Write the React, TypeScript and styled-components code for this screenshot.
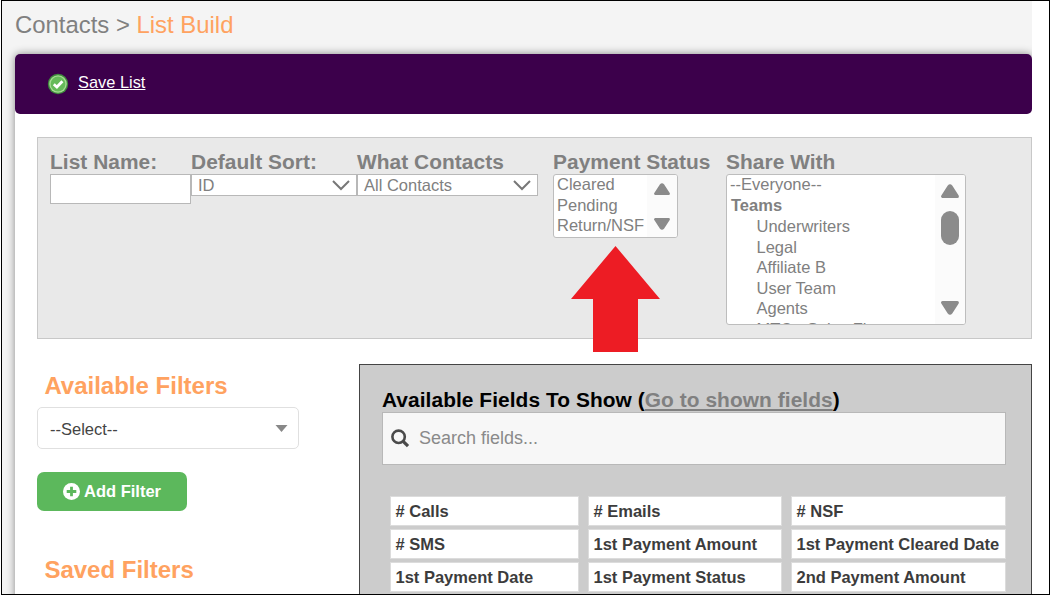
import React from 'react';
import styled, { createGlobalStyle } from 'styled-components';

const GlobalStyle = createGlobalStyle`
  *, *::before, *::after { box-sizing: border-box; }
  html, body { margin: 0; padding: 0; background: #fff; overflow: hidden; }
  body { font-family: "Liberation Sans", Arial, sans-serif; color: #808080; }
  h1, h2, p, ul { margin: 0; padding: 0; }
`;

const Frame = styled.div`
  position: relative;
  width: 1049px;
  height: 595px;
  margin-left: 1px;
  border: 1px solid #000;
  background: #fff;
  overflow: hidden;
`;

const Page = styled.main`
  width: 1030px;
  height: 593px;
  padding-left: 13px;
  background: #f4f4f4;
  overflow: hidden;
`;

const Breadcrumb = styled.h1`
  height: 53px;
  padding-top: 4px;
  font-size: 23.9px;
  font-weight: 400;
  line-height: 40px;
  white-space: nowrap;
`;

const Current = styled.span`
  color: #ffa260;
`;

const Panel = styled.section`
  height: 560px;
  background: #fff;
  border-radius: 5px 5px 0 0;
  box-shadow: 0 0 8px rgba(0, 0, 0, 0.45);
`;

const Toolbar = styled.div`
  display: flex;
  align-items: center;
  height: 60px;
  padding: 0 0 4px 32px;
  border-radius: 5px;
  background: #3c004b;
`;

const CheckIcon = styled.svg`
  width: 22px;
  height: 22px;
  margin-top: 3px;
`;

const SaveLink = styled.a`
  margin-left: 9px;
  color: #fff;
  font-size: 16.4px;
  line-height: 20px;
  text-decoration: underline;
`;

const Settings = styled.div`
  display: flex;
  align-items: flex-start;
  height: 202px;
  margin: 23px 0 0 22px;
  padding: 12px 0 0 12px;
  border: 1px solid #c8c8c8;
  background: #e9e9e9;
`;

const Field = styled.div<{ $width: number }>`
  flex: none;
  width: ${(p) => p.$width}px;
`;

const Label = styled.div`
  height: 24px;
  font-size: 20.9px;
  font-weight: 700;
  letter-spacing: 0.05px;
  line-height: 24px;
  white-space: nowrap;
`;

const TextInput = styled.div`
  width: 141px;
  height: 30px;
  border: 1px solid #b8b8b8;
  background: #fff;
`;

const Select = styled.div<{ $width: number }>`
  display: flex;
  align-items: center;
  justify-content: space-between;
  width: ${(p) => p.$width}px;
  height: 22px;
  padding: 0 6px;
  border: 1px solid #b8b8b8;
  background: #fff;
  font-size: 16.5px;
  line-height: 20px;
`;

const ListBox = styled.div<{ $width: number; $height: number }>`
  display: flex;
  width: ${(p) => p.$width}px;
  height: ${(p) => p.$height}px;
  border: 1px solid #bdbdbd;
  border-radius: 3px;
  background: #fff;
  overflow: hidden;
`;

const Options = styled.ul`
  flex: 1;
  min-width: 0;
  padding-left: 3px;
  list-style: none;
  white-space: nowrap;
`;

const Option = styled.li<{ $kind?: 'group' | 'child' }>`
  height: 20.5px;
  padding-left: ${(p) => (p.$kind === 'child' ? 26.5 : p.$kind === 'group' ? 1 : 0)}px;
  font-size: 16.5px;
  font-weight: ${(p) => (p.$kind === 'group' ? 700 : 400)};
  line-height: ${(p) => (p.$kind === 'child' ? 20 : 18.6)}px;
`;

const ScrollTrack = styled.div<{ $width: number; $pad: string }>`
  display: flex;
  flex: none;
  flex-direction: column;
  align-items: center;
  width: ${(p) => p.$width}px;
  padding: ${(p) => p.$pad};
  background: #fbfbfb;
`;

const ScrollThumb = styled.div`
  width: 18px;
  height: 34px;
  margin-top: 13px;
  border-radius: 9px;
  background: #8b8b8b;
`;

const BottomArrow = styled.div`
  display: flex;
  margin-top: auto;
`;

const Columns = styled.div`
  display: flex;
  align-items: flex-start;
  margin: 25px 0 0 22px;
`;

const Filters = styled.div`
  width: 322px;
`;

const FilterHeading = styled.h2`
  padding-left: 7.4px;
  color: #ffa260;
  font-size: 24px;
  font-weight: 700;
  line-height: 43px;
  height: 43px;
`;

const FilterSelect = styled.div`
  display: flex;
  align-items: center;
  justify-content: space-between;
  width: 262px;
  height: 42px;
  padding: 2px 10px 0 12px;
  border: 1px solid #e0e0e0;
  border-radius: 5px;
  color: #444;
  font-size: 16.5px;
`;

const Caret = styled.svg`
  width: 13px;
  height: 7px;
  margin-top: -2px;
`;

const AddButton = styled.div`
  display: flex;
  align-items: center;
  justify-content: center;
  gap: 4px;
  width: 150px;
  height: 39px;
  margin: 23px 0 37px;
  border-radius: 7px;
  background: #5cb85c;
  color: #fff;
  font-size: 16.5px;
  font-weight: 700;
`;

const FieldsPanel = styled.div`
  width: 673px;
  height: 260px;
  padding: 24px 25px 0 22px;
  border: 1px solid #444;
  background: #ccc;
`;

const FieldsHeading = styled.h2`
  height: 23px;
  color: #000;
  font-size: 20.9px;
  font-weight: 700;
  letter-spacing: 0.06px;
  line-height: 21px;
  white-space: nowrap;
`;

const ShownLink = styled.a`
  color: #808080;
  text-decoration: underline;
`;

const Search = styled.div`
  display: flex;
  align-items: center;
  gap: 9px;
  height: 53px;
  padding-left: 8px;
  border: 1px solid #b8b8b8;
  background: #f7f7f7;
  color: #8a8a8a;
  font-size: 18px;
`;

const FieldGrid = styled.div`
  display: grid;
  grid-template-columns: 189px 194px 215px;
  grid-auto-rows: 30px;
  gap: 3px 9px;
  margin: 31px 0 0 8px;
`;

const FieldCell = styled.div`
  padding-left: 4.5px;
  border: 1px solid #dcdcdc;
  background: #fff;
  color: #3c3c3c;
  font-size: 16.5px;
  font-weight: 700;
  line-height: 28px;
  white-space: nowrap;
`;

const Pointer = styled.svg`
  position: absolute;
  top: 245px;
  left: 569px;
  width: 90px;
  height: 106px;
`;

const Chevron = () => (
  <svg width="18" height="11" viewBox="0 0 18 11" fill="none" stroke="#777" strokeWidth="2">
    <path d="M1 1L9 9L17 1" />
  </svg>
);

const ScrollArrow = ({ size, down }: { size: number; down?: boolean }) => (
  <svg width={size} height={size === 18 ? 14 : 12} viewBox="0 0 18 14" preserveAspectRatio="none">
    <path
      d={down ? 'M1.6 1.6H16.4L10 11.6Q9 12.9 8 11.6Z' : 'M1.6 12.4H16.4L10 2.4Q9 1.1 8 2.4Z'}
      fill="#8b8b8b"
      stroke="#8b8b8b"
      strokeWidth="3"
      strokeLinejoin="round"
    />
  </svg>
);

const fields = [
  '# Calls', '# Emails', '# NSF',
  '# SMS', '1st Payment Amount', '1st Payment Cleared Date',
  '1st Payment Date', '1st Payment Status', '2nd Payment Amount',
];

const teams = ['Underwriters', 'Legal', 'Affiliate B', 'User Team', 'Agents', 'MTC - Sales Fl'];

export default function App() {
  return (
    <>
      <GlobalStyle />
      <Frame>
        <Page>
          <Breadcrumb>Contacts &gt; <Current>List Build</Current></Breadcrumb>
          <Panel>
            <Toolbar>
              <CheckIcon viewBox="0 0 22 22">
                <circle cx="11" cy="11" r="10.2" fill="#3f8a3d" />
                <circle cx="11" cy="11" r="8.8" fill="#a5dc92" />
                <circle cx="11" cy="11" r="7.4" fill="#65ba59" />
                <path d="M6.8 11.2L9.9 14L15.4 8.2" fill="none" stroke="#fff" strokeWidth="2.8" />
              </CheckIcon>
              <SaveLink>Save List</SaveLink>
            </Toolbar>
            <Settings>
              <Field $width={141}>
                <Label>List Name:</Label>
                <TextInput />
              </Field>
              <Field $width={166}>
                <Label>Default Sort:</Label>
                <Select $width={166}>ID<Chevron /></Select>
              </Field>
              <Field $width={196}>
                <Label>What Contacts</Label>
                <Select $width={181}>All Contacts<Chevron /></Select>
              </Field>
              <Field $width={173}>
                <Label>Payment Status</Label>
                <ListBox $width={125} $height={64}>
                  <Options>
                    <Option>Cleared</Option>
                    <Option>Pending</Option>
                    <Option>Return/NSF</Option>
                  </Options>
                  <ScrollTrack $width={30} $pad="8px 0 7px">
                    <ScrollArrow size={16} />
                    <BottomArrow><ScrollArrow size={16} down /></BottomArrow>
                  </ScrollTrack>
                </ListBox>
              </Field>
              <Field $width={240}>
                <Label>Share With</Label>
                <ListBox $width={240} $height={151}>
                  <Options>
                    <Option>--Everyone--</Option>
                    <Option $kind="group">Teams</Option>
                    {teams.map((t) => <Option key={t} $kind="child">{t}</Option>)}
                  </Options>
                  <ScrollTrack $width={30} $pad="9px 0 9px">
                    <ScrollArrow size={18} />
                    <ScrollThumb />
                    <BottomArrow><ScrollArrow size={18} down /></BottomArrow>
                  </ScrollTrack>
                </ListBox>
              </Field>
            </Settings>
            <Columns>
              <Filters>
                <FilterHeading>Available Filters</FilterHeading>
                <FilterSelect>
                  --Select--
                  <Caret viewBox="0 0 13 7"><path d="M0.5 0H12.5L6.5 7Z" fill="#888" /></Caret>
                </FilterSelect>
                <AddButton>
                  <svg width="17" height="17" viewBox="0 0 17 17">
                    <circle cx="8.5" cy="8.5" r="8.5" fill="#fff" />
                    <path d="M8.5 3.7V13.3M3.7 8.5H13.3" stroke="#5cb85c" strokeWidth="2.8" />
                  </svg>
                  Add Filter
                </AddButton>
                <FilterHeading>Saved Filters</FilterHeading>
              </Filters>
              <FieldsPanel>
                <FieldsHeading>Available Fields To Show (<ShownLink>Go to shown fields</ShownLink>)</FieldsHeading>
                <Search>
                  <svg width="19" height="19" viewBox="0 0 19 19" fill="none" stroke="#4a4a4a">
                    <circle cx="7.6" cy="7.8" r="6.2" strokeWidth="2.6" />
                    <path d="M12.2 12.4L17 17.2" strokeWidth="3.2" />
                  </svg>
                  Search fields...
                </Search>
                <FieldGrid>
                  {fields.map((f) => <FieldCell key={f}>{f}</FieldCell>)}
                </FieldGrid>
              </FieldsPanel>
            </Columns>
          </Panel>
        </Page>
        <Pointer viewBox="0 0 90 106">
          <path d="M44.5 0L89 53H67V106H22V53H0Z" fill="#ed1c24" />
        </Pointer>
      </Frame>
    </>
  );
}
